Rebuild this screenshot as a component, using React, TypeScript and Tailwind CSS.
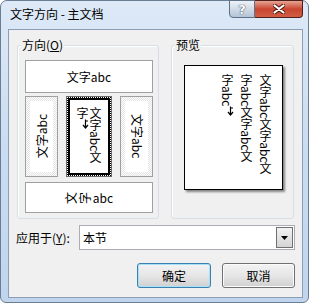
import type { ReactNode } from 'react'

function Group({ label, className, children }: { label: ReactNode; className: string; children: ReactNode }) {
  return (
    <div className={`relative rounded-[3px] border border-[#d5dfe5] shadow-[inset_1px_1px_0_#ffffff] ${className}`}>
      <div className="absolute -top-[9px] left-[3px] bg-[#f0f0f0] px-[1px] leading-[16px]">{label}</div>
      {children}
    </div>
  )
}

function ReturnMark() {
  return (
    <svg width="7" height="10" viewBox="0 0 7 10" className="inline-block">
      <path d="M3.5 0.5 V8.5 M1 6 L3.5 9 L6 6 M3.5 2 H6" stroke="#000" strokeWidth="1.2" fill="none" />
    </svg>
  )
}

function WinButton({ children, isDefault }: { children: ReactNode; isDefault?: boolean }) {
  return (
    <div
      className={`flex h-[25px] items-center justify-center rounded-[3px] border ${
        isDefault
          ? 'w-[74px] border-[#3c7fb1] shadow-[inset_0_0_0_1px_#a5e1f7]'
          : 'w-[73px] border-[#707070] shadow-[inset_0_0_0_1px_#fbfbfb]'
      } bg-linear-to-b from-[#f3f3f3] via-[#e6e6e6] to-[#d0d0d0]`}
    >
      {children}
    </div>
  )
}

// one CJK glyph turned on its side; Liberation first keeps the text box small
function Turned({ ch }: { ch: string }) {
  return (
    <span className="inline-flex h-[14px] w-[14px] items-center justify-center">
      <span className="inline-block -rotate-90 font-['Liberation_Sans','Noto_Sans_CJK_SC',sans-serif] leading-[12px]">{ch}</span>
    </span>
  )
}

export default function App() {
  return (
    <div className="h-[303px] w-[311px] select-none bg-white font-['Noto_Sans_CJK_SC','Noto_Sans',sans-serif] text-[12px] text-black">
      <div className="flex h-[303px] w-[309px] flex-col rounded-t-[7px] rounded-b-[6px] border border-[#6a7d94] bg-linear-to-b from-[#dde9f7] via-[#cadcf1] to-[#c0d5ed]">
        {/* title bar */}
        <div className="flex h-[28px] items-start justify-between">
          <div className="pl-[9px] pt-[4px] leading-[18px]">文字方向 - 主文档</div>
          <div className="-mt-px mr-[5px] flex">
            <div className="flex h-[18px] w-[26px] items-center justify-center rounded-bl-[4px] border border-[#5f7189] bg-linear-to-b from-[#eef2f8] via-[#d0dbe8] to-[#b4c3d6] font-['DejaVu_Sans',sans-serif] text-[13px] font-bold leading-none text-white [text-shadow:0_0_1px_#2c3a4c,0_0_1px_#2c3a4c]">
              ?
            </div>
            <div className="flex h-[18px] w-[48px] items-center justify-center rounded-br-[4px] border border-l-0 border-[#4e2019] bg-linear-to-b from-[#e6a394] via-[#c94631] to-[#d25d44]">
              <svg width="12" height="10" viewBox="0 0 12 10">
                <path d="M1.5 1.5 L10.5 8.5 M10.5 1.5 L1.5 8.5" stroke="#4a1a12" strokeWidth="4" strokeLinecap="round" />
                <path d="M1.5 1.5 L10.5 8.5 M10.5 1.5 L1.5 8.5" stroke="#ffffff" strokeWidth="2.2" strokeLinecap="round" />
              </svg>
            </div>
          </div>
        </div>

        {/* client area */}
        <div className="mr-[5px] mb-[4px] ml-[7px] flex flex-1 flex-col border border-[#8d9db3] bg-[#f0f0f0]">
          <div className="flex gap-[12px] px-[8px] pt-[15px]">
            <Group
              className="h-[174px] w-[142px]"
              label={
                <span>
                  方向(<span className="underline">O</span>)
                </span>
              }
            >
              <div className="flex flex-col pt-[14px] pl-[7px]">
                <div className="flex h-[33px] w-[128px] items-center justify-center border border-[#a0a0a0] bg-white">文字abc</div>
                <div className="mt-[3px] flex h-[81px] w-[128px] gap-[8px]">
                  <div className="w-[33px] border border-[#a0a0a0] bg-[image:repeating-conic-gradient(#e2e2e2_0_25%,#ffffff_0_50%)] bg-[length:2px_2px] p-[4px]">
                    <div className="flex h-full items-center justify-center bg-white">
                      <span className="rotate-180 leading-[14px] [text-orientation:sideways] [writing-mode:vertical-rl]">文字abc</span>
                    </div>
                  </div>
                  <div className="w-[46px] border border-[#6a6a6a] bg-[image:repeating-conic-gradient(#000000_0_25%,#ffffff_0_50%)] bg-[length:2px_2px] p-[1px]">
                    <div className="flex h-full justify-center border-2 border-black bg-white pt-[7px]">
                      <span className="leading-[13px] [writing-mode:vertical-rl]">
                        文字abc文
                        <br />
                        字<ReturnMark />
                      </span>
                    </div>
                  </div>
                  <div className="w-[33px] border border-[#a0a0a0] bg-[image:repeating-conic-gradient(#e2e2e2_0_25%,#ffffff_0_50%)] bg-[length:2px_2px] p-[4px]">
                    <div className="flex h-full items-center justify-center bg-white">
                      <span className="leading-[14px] [text-orientation:sideways] [writing-mode:vertical-rl]">文字abc</span>
                    </div>
                  </div>
                </div>
                <div className="mt-[5px] flex h-[31px] w-[128px] items-center justify-center border border-[#a0a0a0] bg-white">
                  <Turned ch="文" />
                  <Turned ch="字" />
                  <span>abc</span>
                </div>
              </div>
            </Group>

            <Group className="h-[174px] w-[123px]" label="预览">
              <div className="pt-[19px] pl-[12px]">
                <div className="flex h-[125px] w-[99px] justify-end border border-black bg-white pt-[8px] pr-[7px] shadow-[2px_2px_2px_rgba(0,0,0,0.45)]">
                  <span className="leading-[19px] [writing-mode:vertical-rl]">
                    文字abc文字abc文
                    <br />
                    字abc文字abc文
                    <br />
                    字abc<ReturnMark />
                  </span>
                </div>
              </div>
            </Group>
          </div>

          {/* apply to */}
          <div className="mt-[6px] flex items-center pr-[7px] pl-[7px]">
            <div className="w-[63px] leading-[16px]">
              应用于(<span className="underline">Y</span>):
            </div>
            <div className="flex h-[25px] flex-1 items-center border border-[#abadb3] bg-white">
              <div className="flex-1 pl-[3px]">本节</div>
              <div className="mr-px flex h-[21px] w-[17px] items-center justify-center border border-[#707070] bg-linear-to-b from-[#f2f2f2] to-[#d4d4d4]">
                <svg width="7" height="4" viewBox="0 0 7 4">
                  <path d="M0 0 H7 L3.5 4 Z" fill="#000" />
                </svg>
              </div>
            </div>
          </div>

          {/* buttons */}
          <div className="mt-[13px] flex justify-end gap-[11px] pr-[7px]">
            <WinButton isDefault>确定</WinButton>
            <WinButton>取消</WinButton>
          </div>
        </div>
      </div>
    </div>
  )
}
